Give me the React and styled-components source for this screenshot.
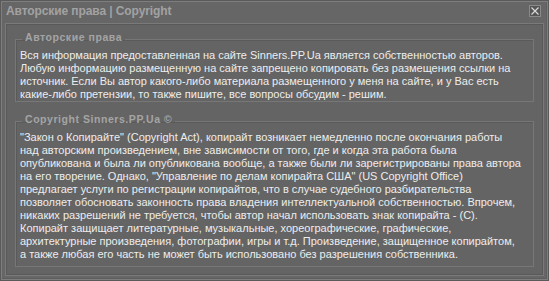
import React from 'react';
import styled, { createGlobalStyle } from 'styled-components';

const GlobalStyle = createGlobalStyle`
    html, body {
        margin: 0;
        padding: 0;
        background: #5a5a5a;
    }
`;

const firstBlock = [
    'Вся информация предоставленная на сайте Sinners.PP.Ua является собственностью авторов.',
    'Любую информацию размещенную на сайте запрещено копировать без размещения ссылки на',
    'источник. Если Вы автор какого-либо материала размещенного у меня на сайте, и у Вас есть',
    'какие-либо претензии, то также пишите, все вопросы обсудим - решим.',
];

const secondBlock = [
    '"Закон о Копирайте" (Copyright Act), копирайт возникает немедленно после окончания работы',
    'над авторским произведением, вне зависимости от того, где и когда эта работа была',
    'опубликована и была ли опубликована вообще, а также были ли зарегистрированы права автора',
    'на его творение. Однако, "Управление по делам копирайта США" (US Copyright Office)',
    'предлагает услуги по регистрации копирайтов, что в случае судебного разбирательства',
    'позволяет обосновать законность права владения интеллектуальной собственностью. Впрочем,',
    'никаких разрешений не требуется, чтобы автор начал использовать знак копирайта - (С).',
    'Копирайт защищает литературные, музыкальные, хореографические, графические,',
    'архитектурные произведения, фотографии, игры и т.д. Произведение, защищенное копирайтом,',
    'а также любая его часть не может быть использовано без разрешения собственника.',
];

function App() {
    return (
        <>
            <GlobalStyle />
            <Window>
                <TitleBar>
                    <Title>Авторские права | Copyright</Title>
                    <CloseButton aria-label="close">
                        <svg width="10" height="10" viewBox="0 0 10 10">
                            <path d="M1.5 1.5 L8.5 8.5 M8.5 1.5 L1.5 8.5" stroke="#dadada" strokeWidth="1.2" />
                        </svg>
                    </CloseButton>
                </TitleBar>
                <Panel>
                    <Group $mb={12} $pt={3} $pb={0}>
                        <Legend>Авторские права</Legend>
                        {firstBlock.map((line, i) => <Line key={i}>{line}</Line>)}
                    </Group>
                    <Group $pt={3} $pb={5}>
                        <Legend>Copyright Sinners.PP.Ua ©</Legend>
                        {secondBlock.map((line, i) => <Line key={i}>{line}</Line>)}
                    </Group>
                </Panel>
            </Window>
        </>
    );
}

export default App;

const Window = styled.div`
    width: 549px;
    height: 281px;
    box-sizing: border-box;
    background: #666666;
    border: 1px solid #5a5a5a;
    box-shadow: inset 1px 1px 0 #7e7e7e, inset -1px -1px 0 #7e7e7e, inset -2px -2px 0 #5e5e5e;
    display: flex;
    flex-direction: column;
    padding: 0 4px 4px 4px;
    font-family: "Liberation Sans", Arial, sans-serif;
`;

const TitleBar = styled.div`
    flex-shrink: 0;
    height: 22px;
    box-sizing: border-box;
    display: flex;
    align-items: flex-start;
    justify-content: space-between;
    padding: 4px 0 0 1px;
`;

const Title = styled.div`
    font-weight: bold;
    font-size: 12px;
    line-height: 12px;
    letter-spacing: -0.1px;
    color: #a2a2a2;
`;

const CloseButton = styled.div`
    width: 12px;
    height: 12px;
    box-sizing: border-box;
    border: 1px solid #8a8a8a;
    background: #555555;
    display: flex;
    align-items: center;
    justify-content: center;
    margin-right: 3px;
`;

const Panel = styled.div`
    flex: 1;
    min-height: 0;
    overflow: hidden;
    box-sizing: border-box;
    border: 1px solid #7a7a7a;
    box-shadow: inset 1px 1px 0 #595959, inset -1px -1px 0 #595959;
    background: #646464;
    padding: 8px 9px 0 9px;
`;

const Group = styled.fieldset`
    margin: 0 0 ${p => p.$mb || 0}px 0;
    border: 1px solid #777777;
    box-shadow: inset 1px 1px 0 #5a5a5a;
    padding: ${p => p.$pt}px 4px ${p => p.$pb}px 4px;
`;

const Legend = styled.legend`
    font-weight: bold;
    font-size: 10.5px;
    line-height: 11px;
    letter-spacing: 0.55px;
    color: #a4a4a4;
    padding: 0 3px 3px 3px;
    margin-left: 2px;
`;

const Line = styled.div`
    font-size: 11px;
    line-height: 13px;
    color: #ededed;
    white-space: nowrap;
`;
